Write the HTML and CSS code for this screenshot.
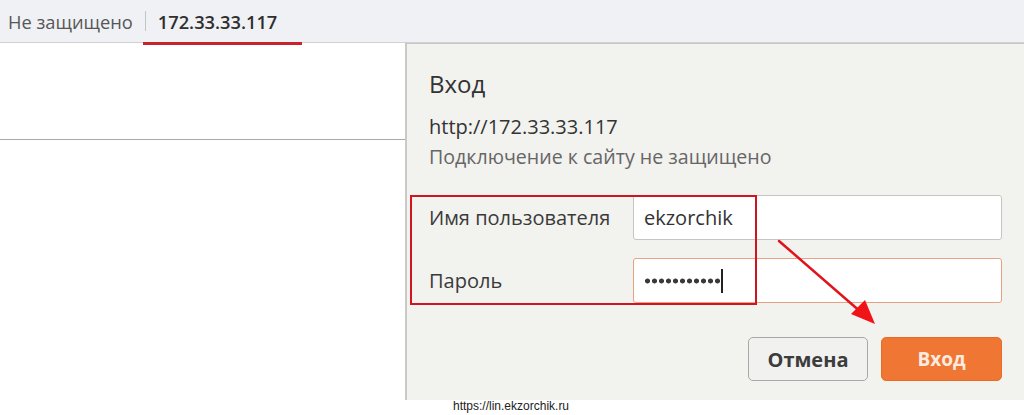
FILE: index.html
```html
<!DOCTYPE html>
<html lang="ru">
<head>
<meta charset="utf-8">
<title>Вход</title>
<link rel="stylesheet" href="styles.css">
</head>
<body>
<div class="screen">
  <header class="topbar">
    <span class="insecure">Не защищено</span>
    <span class="sep"></span>
    <span class="host">172.33.33.117</span>
  </header>
  <div class="page-head"></div>

  <section class="dialog">
    <h1 class="title">Вход</h1>
    <div class="origin">http://172.33.33.117</div>
    <div class="warn">Подключение к сайту не защищено</div>
    <div class="form">
      <label class="label">Имя пользователя</label>
      <div class="field">ekzorchik</div>
      <label class="label">Пароль</label>
      <div class="field focused"><span class="dots"></span><span class="caret"></span></div>
      <div class="mark"></div>
    </div>
    <div class="actions">
      <button class="btn cancel">Отмена</button>
      <button class="btn ok">Вход</button>
    </div>
  </section>

  <svg class="arrow" width="1024" height="415" viewBox="0 0 1024 415">
    <line x1="779" y1="241" x2="862" y2="313" stroke="#e0141a" stroke-width="2.5" stroke-linecap="round"/>
    <polygon points="875,324 851,314 865,300" fill="#f01418"/>
  </svg>

  <div class="watermark">https://lin.ekzorchik.ru</div>
</div>
</body>
</html>
```

FILE: styles.css
```css
* { box-sizing: border-box; }
html, body { margin: 0; padding: 0; }
body {
  width: 1024px;
  height: 415px;
  overflow: hidden;
  background: #ffffff;
  font-family: "Open Sans", "Noto Sans", sans-serif;
}
.screen {
  position: relative;
  width: 1024px;
  height: 415px;
}
.topbar {
  height: 43px;
  background: #eff1f4;
  border-bottom: 1px solid #cfd1d4;
  display: flex;
  align-items: center;
  padding-left: 8px;
  font-size: 18.3px;
}
.insecure { color: #575757; }
.sep {
  width: 1px;
  height: 20px;
  background: #c4c4c4;
  margin: 0 0 0 12px;
}
.host {
  position: relative;
  align-self: stretch;
  display: flex;
  align-items: center;
  color: #2f2f2f;
  font-weight: 600;
  font-size: 18.3px;
  padding: 0 25px 0 15px;
  margin-left: -3px;
  border-bottom: 3px solid #c8232a;
  margin-bottom: -3px;
}
.page-head {
  height: 97px;
  width: 406px;
  border-bottom: 1px solid #a9a9a9;
}
.dialog {
  position: absolute;
  left: 405px;
  top: 43px;
  width: 619px;
  height: 357px;
  background: #f2f2ef;
  border-left: 2px solid #c9c9c6;
  border-top: 1px solid #c6c6c3;
  padding: 26px 22px 0 22px;
  color: #333333;
}
.title {
  margin: 0;
  font-size: 24px;
  font-weight: 400;
  line-height: 28px;
  color: #333;
}
.origin {
  margin-top: 18px;
  font-size: 20px;
  line-height: 22px;
  color: #333;
}
.warn {
  margin-top: 8px;
  font-size: 19.6px;
  line-height: 22px;
  color: #666;
}
.form {
  position: relative;
  margin-top: 27px;
  display: grid;
  grid-template-columns: 204px 369px;
  row-gap: 18px;
  align-items: center;
}
.label {
  font-size: 20px;
  color: #3a3a3a;
}
.field {
  height: 45px;
  background: #ffffff;
  border: 1px solid #c5c5c5;
  border-radius: 3px;
  padding-left: 10px;
  display: flex;
  align-items: center;
  font-size: 20px;
  color: #333;
}
.field.focused { border-color: #e7a283; }
.dots {
  width: 77px;
  height: 6px;
  background: radial-gradient(circle, #3a3a3a 2.2px, transparent 2.8px) 0 0 / 7px 6px repeat-x;
}
.caret {
  width: 1.5px;
  height: 24px;
  background: #222;
}
.mark {
  position: absolute;
  left: -19px;
  top: 0;
  width: 347px;
  height: 110px;
  border: 2px solid #cf1520;
}
.actions {
  margin-top: 34px;
  display: flex;
  justify-content: flex-end;
  gap: 13px;
  width: 573px;
}
.btn {
  font-family: inherit;
  font-size: 19px;
  font-weight: 700;
  height: 44px;
  border-radius: 5px;
  cursor: pointer;
}
.cancel {
  width: 120px;
  background: #f1f1ef;
  border: 1px solid #a8a8a8;
  color: #3c3c3c;
  font-size: 20px;
}
.ok {
  width: 121px;
  background: #ef7633;
  border: 1px solid #e86c28;
  color: #fdebe0;
}
.arrow {
  position: absolute;
  left: 0;
  top: 0;
  pointer-events: none;
}
.watermark {
  position: absolute;
  left: 453px;
  top: 399px;
  font-family: "Liberation Sans", Arial, sans-serif;
  font-size: 12px;
  color: #222;
}
```
